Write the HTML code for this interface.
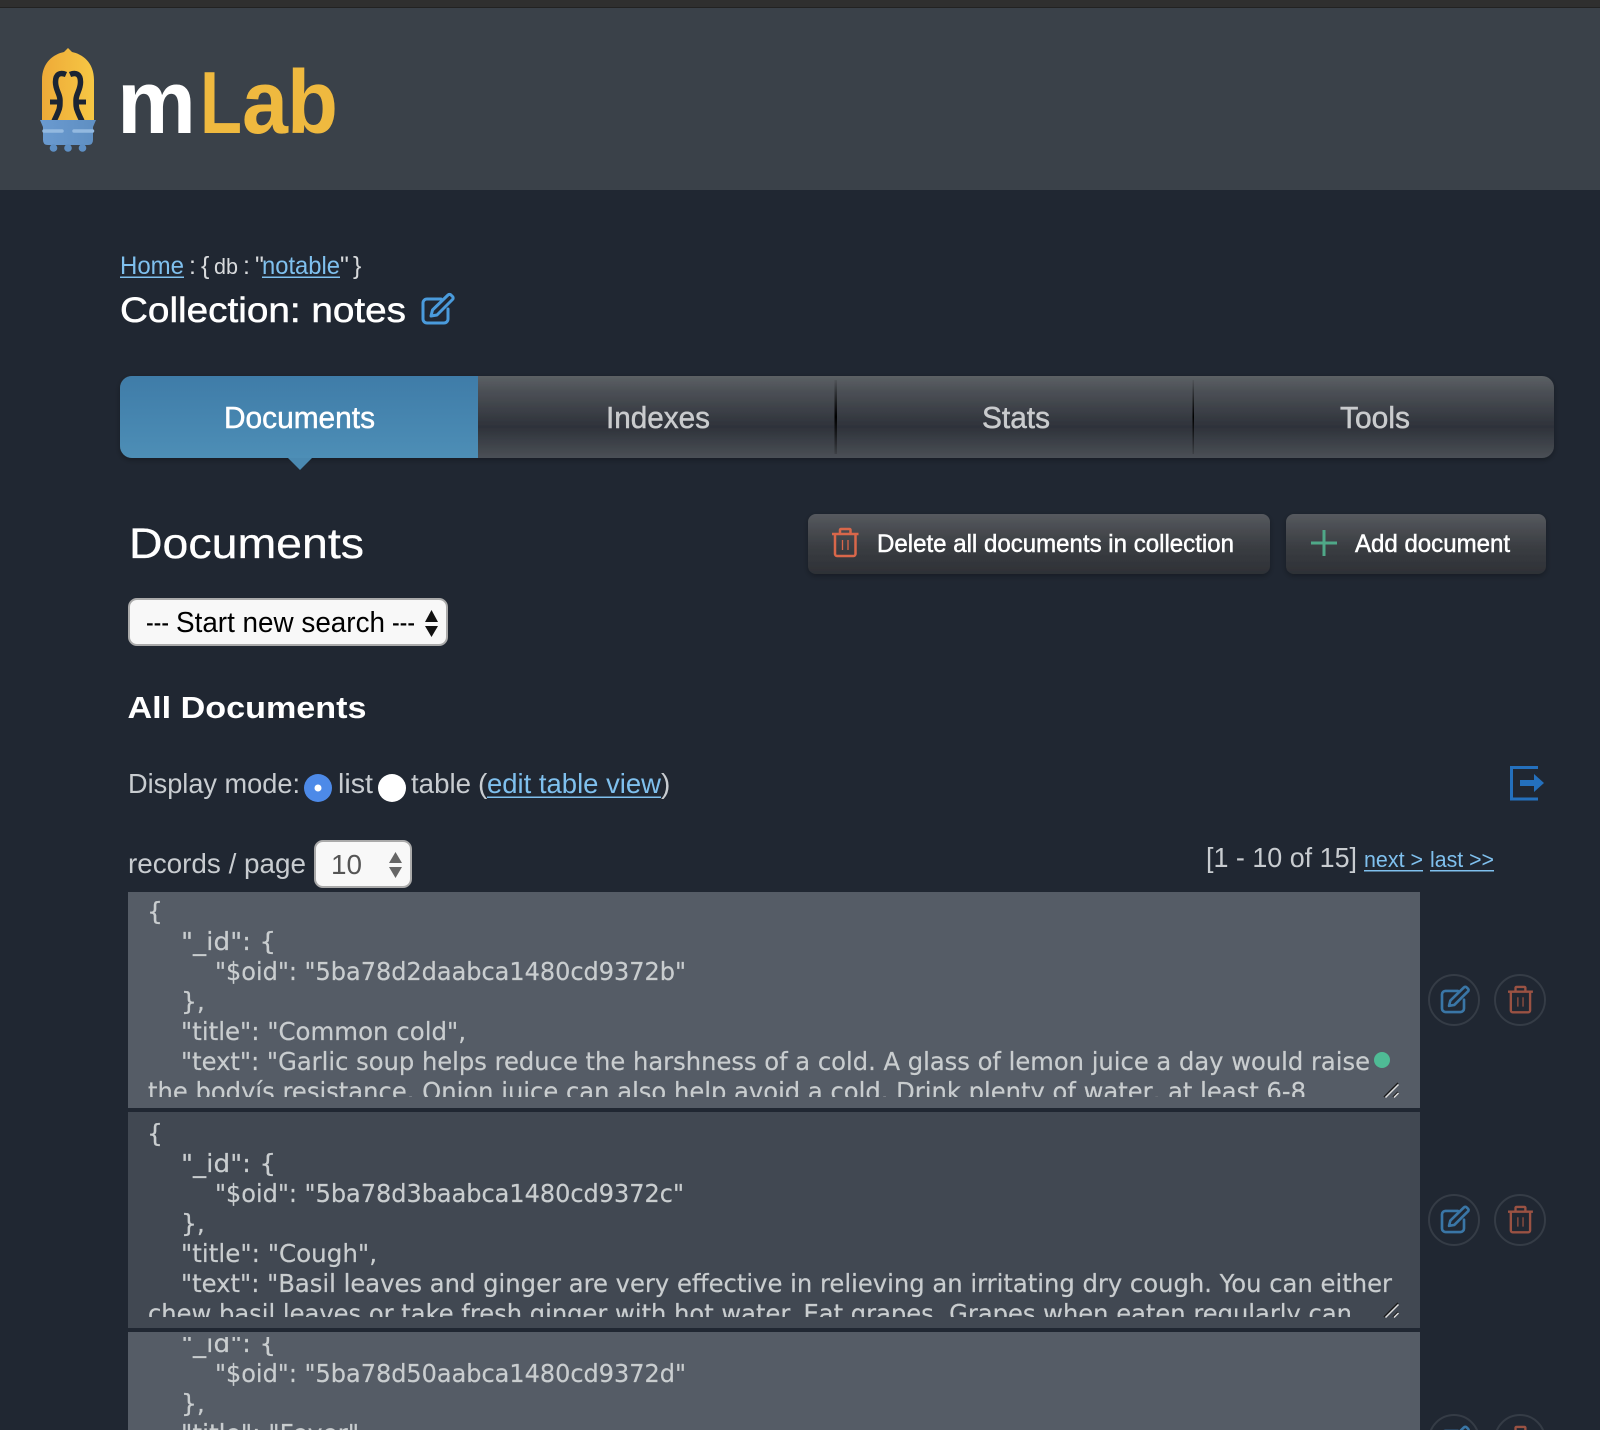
<!DOCTYPE html>
<html><head><meta charset="utf-8"><style>
html,body{margin:0;padding:0;background:#202732;width:1600px;height:1430px;overflow:hidden}
svg{display:block}
text{font-family:"Liberation Sans",sans-serif;white-space:pre}
.m text{font-family:"DejaVu Sans",sans-serif;font-size:25px;fill:#c9cdcf;stroke:#c9cdcf;stroke-width:.2}
</style></head><body>
<svg width="1600" height="1430" viewBox="0 0 1600 1430" xmlns="http://www.w3.org/2000/svg">
<defs>
<linearGradient id="tab" x1="0" y1="0" x2="0" y2="1"><stop offset="0" stop-color="#5c6064"/><stop offset=".18" stop-color="#4c5056"/><stop offset=".62" stop-color="#2e323a"/><stop offset="1" stop-color="#4b5056"/></linearGradient>
<linearGradient id="act" x1="0" y1="0" x2="0" y2="1"><stop offset="0" stop-color="#3f7ca8"/><stop offset="1" stop-color="#4d8eb6"/></linearGradient>
<linearGradient id="btn" x1="0" y1="0" x2="0" y2="1"><stop offset="0" stop-color="#56595e"/><stop offset=".55" stop-color="#3a3d42"/><stop offset="1" stop-color="#2e3136"/></linearGradient>
<linearGradient id="bulb" x1="0" y1="0" x2="1" y2="0"><stop offset="0" stop-color="#eeaa38"/><stop offset="1" stop-color="#f6c744"/></linearGradient>
<linearGradient id="base" x1="0" y1="0" x2="1" y2="0"><stop offset="0" stop-color="#6a9ad0"/><stop offset="1" stop-color="#5f8fc2"/></linearGradient>
<linearGradient id="sep" x1="0" y1="0" x2="0" y2="1"><stop offset="0" stop-color="#111" stop-opacity=".1"/><stop offset=".5" stop-color="#000"/><stop offset="1" stop-color="#111" stop-opacity=".2"/></linearGradient>
<filter id="sh" x="-5%" y="-20%" width="110%" height="150%"><feDropShadow dx="0" dy="2" stdDeviation="3" flood-color="#000" flood-opacity=".3"/></filter>
<clipPath id="c1"><rect x="128" y="892" width="1292" height="205"/></clipPath>
<clipPath id="c2"><rect x="128" y="1112" width="1292" height="205"/></clipPath>
<clipPath id="c3"><rect x="128" y="1337" width="1292" height="93"/></clipPath>
<clipPath id="tabs"><rect x="120" y="376" width="1434" height="82" rx="12"/></clipPath>
<g id="edit" fill="none" stroke-linecap="round" stroke-linejoin="round">
<path d="M18 5H4a4 4 0 0 0-4 4V25a4 4 0 0 0 4 4H21a4 4 0 0 0 4-4V15"/>
<path d="M8 22l1.5-6L25 1a2 2 0 0 1 3 0l1.5 1.5a2 2 0 0 1 0 3L14 21z"/>
</g>
<g id="trash" fill="none" stroke-linejoin="round">
<path d="M0 6H26.5"/>
<path d="M8 6V2a1 1 0 0 1 1-1h8.5a1 1 0 0 1 1 1V6"/>
<path d="M3 6V26a2 2 0 0 0 2 2H21.5a2 2 0 0 0 2-2V6"/>
<path d="M10.5 12V22M16 12V22" stroke-width="1.3"/>
</g>
<g id="grip" stroke-width="1.5" fill="none">
<path d="M1 15L15 1" stroke="#1a1a1a"/><path d="M2.5 15.5L15.5 2.5" stroke="#ddd"/>
<path d="M10 15L15 10" stroke="#1a1a1a"/><path d="M11 15.5L15.5 11" stroke="#ddd"/>
</g>
</defs>

<rect width="1600" height="1430" fill="#202732"/>
<rect width="1600" height="8" fill="#2f2f2f"/>
<rect y="7" width="1600" height="1" fill="#222"/>
<rect y="8" width="1600" height="182" fill="#3a4149"/>

<!-- logo -->
<path d="M42 120V80C42 62 54 54 64 52L68 48L72 52C82 54 94 62 94 80V120Z" fill="url(#bulb)"/>
<g fill="none" stroke="#1b2433" stroke-width="5.500">
<path d="M66 74.500C60 72 55.500 74 55.500 82C55.500 90 60 94 60 100C60 105 60 108 58.500 111C57 115 55.500 118 54 121"/>
<path d="M70 74.500C76 72 80.500 74 80.500 82C80.500 90 76 94 76 100C76 105 76 108 77.500 111C79 115 80.500 118 82 121"/>
<path d="M50 102H59M77 102H86" stroke-width="5"/>
</g>
<path d="M40 120H96L93 127V140Q93 145 88 145H48Q43 145 43 140V127Z" fill="url(#base)"/>
<path d="M44 131H62M74 131H92.500" stroke="#93b9e0" stroke-width="3.500" stroke-linecap="round"/>
<circle cx="53.500" cy="148" r="3.800" fill="#5e8fc4"/><circle cx="68" cy="148" r="3.800" fill="#5e8fc4"/><circle cx="82.500" cy="148" r="3.800" fill="#5e8fc4"/>
<text x="117" y="133" font-size="90" font-weight="700" fill="#fff" textLength="79" lengthAdjust="spacingAndGlyphs">m</text>
<text x="200" y="133" font-size="88" font-weight="700" fill="#efb93f" textLength="42" lengthAdjust="spacingAndGlyphs">L</text>
<text x="242" y="133" font-size="90" font-weight="700" fill="#efb93f" textLength="46" lengthAdjust="spacingAndGlyphs">a</text>
<text x="287" y="133" font-size="90" font-weight="700" fill="#efb93f" textLength="51" lengthAdjust="spacingAndGlyphs">b</text>

<!-- breadcrumb -->
<g font-size="25">
<text x="120" y="274" fill="#7fc0ee" textLength="64" lengthAdjust="spacingAndGlyphs">Home</text>
<text x="189" y="274" fill="#d8dadc">:</text>
<text x="201" y="274" fill="#d8dadc">{</text>
<text x="214" y="274" fill="#d8dadc" font-size="22" textLength="24" lengthAdjust="spacingAndGlyphs">db</text>
<text x="243" y="274" fill="#d8dadc">:</text>
<text x="255" y="274" fill="#d8dadc">"</text>
<text x="262" y="274" fill="#7fc0ee" textLength="78" lengthAdjust="spacingAndGlyphs">notable</text>
<text x="340" y="274" fill="#d8dadc">"</text>
<text x="353" y="274" fill="#d8dadc">}</text>
</g>
<rect x="120" y="276.500" width="64" height="1.500" fill="#7fc0ee"/>
<rect x="262" y="276.500" width="78" height="1.500" fill="#7fc0ee"/>
<text x="120" y="322" font-size="35" fill="#fff" stroke="#fff" stroke-width=".5" textLength="286" lengthAdjust="spacingAndGlyphs">Collection: notes</text>
<use href="#edit" transform="translate(423,294)" stroke="#4a9bdc" stroke-width="3"/>

<!-- tabs -->
<g filter="url(#sh)"><rect x="120" y="376" width="1434" height="82" rx="12" fill="url(#tab)"/></g>
<g clip-path="url(#tabs)">
<rect x="120" y="376" width="358" height="82" fill="url(#act)"/>
<rect x="834.500" y="380" width="2.500" height="74" fill="url(#sep)"/>
<rect x="1192.500" y="380" width="1.500" height="74" fill="url(#sep)"/>
</g>
<path d="M288 458H312L300 470Z" fill="#4a89b1"/>
<g font-size="31">
<text x="224" y="428" fill="#fff" stroke="#fff" stroke-width=".5" textLength="151" lengthAdjust="spacingAndGlyphs">Documents</text>
<text x="606" y="428" fill="#c9cbcd" stroke="#c9cbcd" stroke-width=".5" textLength="104" lengthAdjust="spacingAndGlyphs">Indexes</text>
<text x="982" y="428" fill="#c9cbcd" stroke="#c9cbcd" stroke-width=".5" textLength="68" lengthAdjust="spacingAndGlyphs">Stats</text>
<text x="1340" y="428" fill="#c9cbcd" stroke="#c9cbcd" stroke-width=".5" textLength="70" lengthAdjust="spacingAndGlyphs">Tools</text>
</g>

<!-- heading & buttons -->
<text x="129" y="558" font-size="43" fill="#fff" stroke="#fff" stroke-width=".3" textLength="235" lengthAdjust="spacingAndGlyphs">Documents</text>
<g filter="url(#sh)">
<rect x="808" y="514" width="462" height="60" rx="8" fill="url(#btn)"/>
<rect x="1286" y="514" width="260" height="60" rx="8" fill="url(#btn)"/>
</g>
<use href="#trash" transform="translate(832,528)" stroke="#d9674a" stroke-width="2.500"/>
<text x="877" y="552" font-size="25" fill="#fff" stroke="#fff" stroke-width=".5" textLength="357" lengthAdjust="spacingAndGlyphs">Delete all documents in collection</text>
<path d="M1324 530V556M1311 543H1337" stroke="#4fa888" stroke-width="3"/>
<text x="1355" y="552" font-size="25" fill="#fff" stroke="#fff" stroke-width=".5" textLength="155" lengthAdjust="spacingAndGlyphs">Add document</text>

<!-- search select -->
<rect x="129" y="599" width="318" height="46" rx="8" fill="#f8f8f8" stroke="#aaa" stroke-width="2"/>
<g font-size="29" fill="#000">
<text x="146" y="632" textLength="23" lengthAdjust="spacingAndGlyphs">---</text>
<text x="176" y="632" textLength="209" lengthAdjust="spacingAndGlyphs">Start new search</text>
<text x="392" y="632" textLength="23" lengthAdjust="spacingAndGlyphs">---</text>
</g>
<path d="M425 622L431.500 610L438 622ZM425 626H438L431.500 637Z" fill="#111"/>

<text x="127.500" y="718" font-size="31" font-weight="700" fill="#fff" textLength="239" lengthAdjust="spacingAndGlyphs">All Documents</text>

<!-- display mode -->
<g font-size="28" fill="#c8ccd0">
<text x="128" y="793" textLength="172" lengthAdjust="spacingAndGlyphs">Display mode:</text>
<text x="338" y="793" textLength="35" lengthAdjust="spacingAndGlyphs">list</text>
<text x="411" y="793" textLength="60" lengthAdjust="spacingAndGlyphs">table</text>
<text x="478" y="793">(</text>
<text x="487" y="793" fill="#7fc0ee" textLength="174" lengthAdjust="spacingAndGlyphs">edit table view</text>
<text x="661" y="793">)</text>
<text x="128" y="873" textLength="178" lengthAdjust="spacingAndGlyphs">records / page</text>
<text x="1206" y="867" textLength="151" lengthAdjust="spacingAndGlyphs">[1 - 10 of 15]</text>
</g>
<rect x="487" y="796.500" width="174" height="1.500" fill="#7fc0ee"/>
<circle cx="318" cy="788" r="14" fill="#4d8ae8"/><circle cx="318" cy="788" r="3.500" fill="#fff"/>
<circle cx="392" cy="788" r="14" fill="#fff"/>
<g font-size="22" fill="#7fc0ee">
<text x="1364" y="867" textLength="59" lengthAdjust="spacingAndGlyphs">next &gt;</text>
<text x="1430" y="867" textLength="64" lengthAdjust="spacingAndGlyphs">last &gt;&gt;</text>
</g>
<rect x="1364" y="870" width="59" height="1.500" fill="#7fc0ee"/>
<rect x="1430" y="870" width="64" height="1.500" fill="#7fc0ee"/>

<!-- export icon -->
<path d="M1538 767.500H1511.500V799H1538" fill="none" stroke="#2470bd" stroke-width="3"/>
<path d="M1520 780H1534V774L1544 783L1534 792V786H1520Z" fill="#2470bd"/>

<!-- records select -->
<rect x="315" y="841" width="96" height="46" rx="8" fill="#f8f8f8" stroke="#aaa" stroke-width="2"/>
<text x="331" y="874" font-size="28" fill="#555" textLength="31" lengthAdjust="spacingAndGlyphs">10</text>
<path d="M389 863L395.500 852L402 863ZM389 867H402L395.500 878Z" fill="#666"/>

<!-- docs -->
<rect x="128" y="892" width="1292" height="216" fill="#555c66"/>
<rect x="128" y="1112" width="1292" height="216" fill="#414852"/>
<rect x="128" y="1332" width="1292" height="98" fill="#555c66"/>

<g class="m" clip-path="url(#c1)">
<text x="147" y="920">{</text>
<text x="181" y="950" textLength="95" lengthAdjust="spacingAndGlyphs">"_id": {</text>
<text x="215" y="980" textLength="471" lengthAdjust="spacingAndGlyphs">"$oid": "5ba78d2daabca1480cd9372b"</text>
<text x="181" y="1010">},</text>
<text x="181" y="1040" textLength="285" lengthAdjust="spacingAndGlyphs">"title": "Common cold",</text>
<text x="181" y="1070" textLength="1189" lengthAdjust="spacingAndGlyphs">"text": "Garlic soup helps reduce the harshness of a cold. A glass of lemon juice a day would raise</text>
<text x="148" y="1100" textLength="1158" lengthAdjust="spacingAndGlyphs">the bodyís resistance. Onion juice can also help avoid a cold. Drink plenty of water, at least 6-8</text>
</g>
<g class="m" clip-path="url(#c2)">
<text x="147" y="1142">{</text>
<text x="181" y="1172" textLength="95" lengthAdjust="spacingAndGlyphs">"_id": {</text>
<text x="215" y="1202" textLength="469" lengthAdjust="spacingAndGlyphs">"$oid": "5ba78d3baabca1480cd9372c"</text>
<text x="181" y="1232">},</text>
<text x="181" y="1262" textLength="196" lengthAdjust="spacingAndGlyphs">"title": "Cough",</text>
<text x="181" y="1292" textLength="1211" lengthAdjust="spacingAndGlyphs">"text": "Basil leaves and ginger are very effective in relieving an irritating dry cough. You can either</text>
<text x="148" y="1322" textLength="1204" lengthAdjust="spacingAndGlyphs">chew basil leaves or take fresh ginger with hot water. Eat grapes. Grapes when eaten regularly can</text>
</g>
<g class="m" clip-path="url(#c3)">
<text x="181" y="1352" textLength="95" lengthAdjust="spacingAndGlyphs">"_id": {</text>
<text x="215" y="1382" textLength="471" lengthAdjust="spacingAndGlyphs">"$oid": "5ba78d50aabca1480cd9372d"</text>
<text x="181" y="1412">},</text>
<text x="181" y="1442" textLength="186" lengthAdjust="spacingAndGlyphs">"title": "Fever",</text>
</g>

<circle cx="1382" cy="1060" r="8" fill="#4fbb95"/>
<use href="#grip" transform="translate(1383,1082)"/>
<use href="#grip" transform="translate(1383,1302)"/>

<!-- actions -->
<g fill="none" stroke="#353c46" stroke-width="2">
<circle cx="1454" cy="1000" r="25"/><circle cx="1520" cy="1000" r="25"/>
<circle cx="1454" cy="1220" r="25"/><circle cx="1520" cy="1220" r="25"/>
<circle cx="1454" cy="1440" r="25"/><circle cx="1520" cy="1440" r="25"/>
</g>
<use href="#edit" transform="translate(1442,986.500) scale(.88)" stroke="#3a76a6" stroke-width="3"/>
<use href="#trash" transform="translate(1508,986) scale(.94)" stroke="#9a5243" stroke-width="2.500"/>
<use href="#edit" transform="translate(1442,1206.500) scale(.88)" stroke="#3a76a6" stroke-width="3"/>
<use href="#trash" transform="translate(1508,1206) scale(.94)" stroke="#9a5243" stroke-width="2.500"/>
<use href="#edit" transform="translate(1442,1426.500) scale(.88)" stroke="#3a76a6" stroke-width="3"/>
<use href="#trash" transform="translate(1508,1426) scale(.94)" stroke="#9a5243" stroke-width="2.500"/>
</svg>
</body></html>
